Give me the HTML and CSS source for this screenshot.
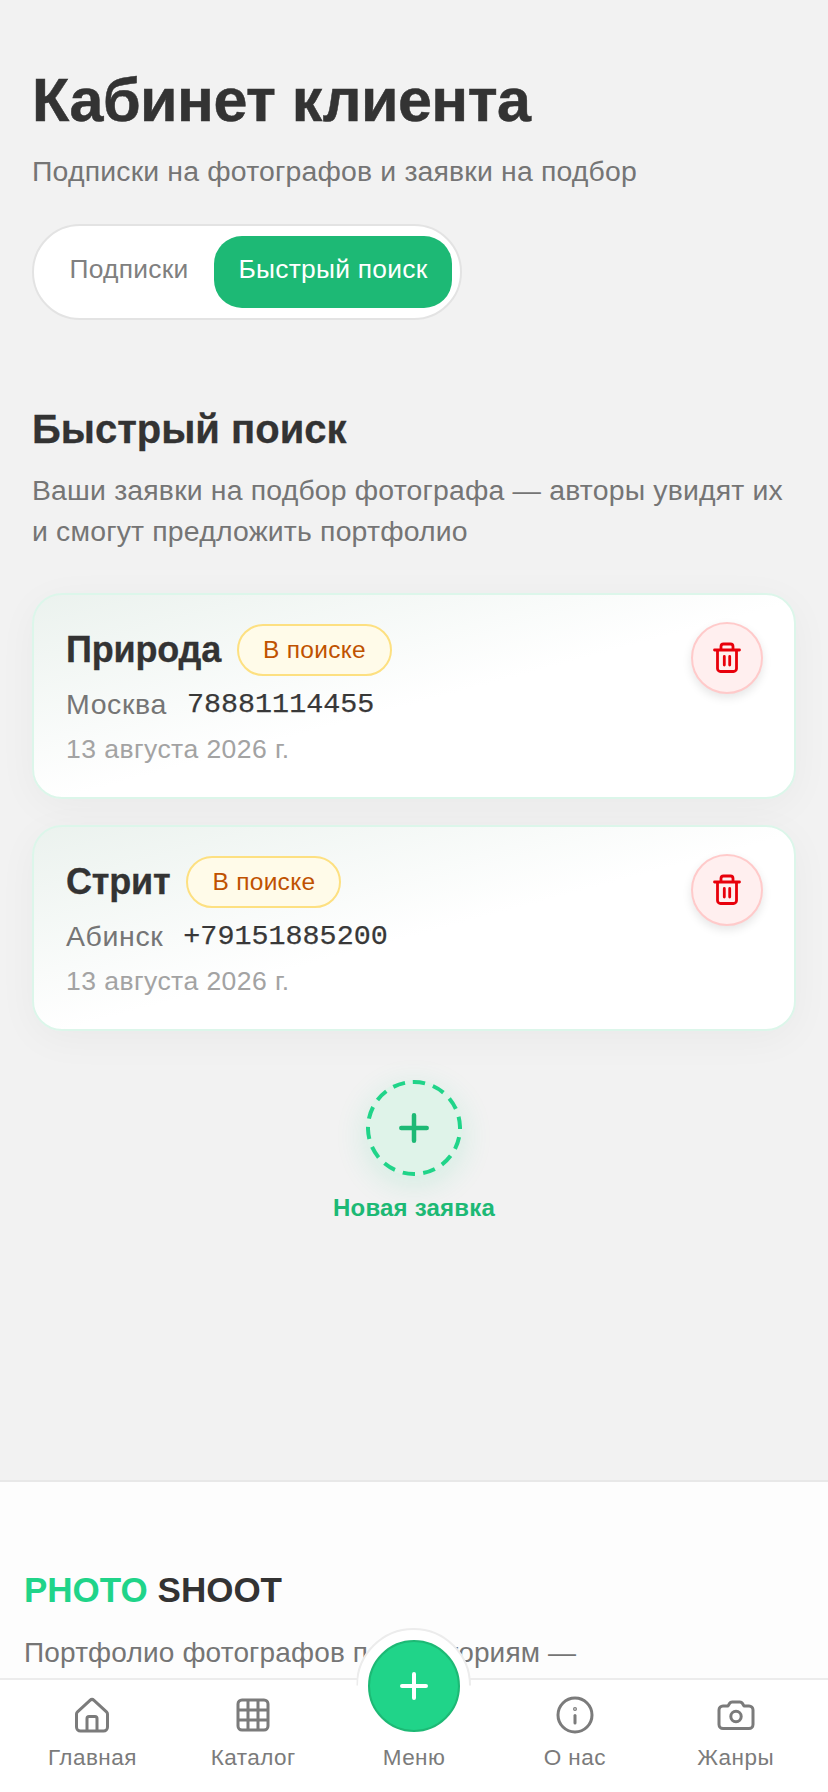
FILE: index.html
```html
<!DOCTYPE html>
<html lang="ru">
<head>
<meta charset="utf-8">
<title>Кабинет клиента</title>
<link rel="stylesheet" href="styles.css">
</head>
<body>
<main class="content">
  <h1 class="title">Кабинет клиента</h1>
  <p class="subtitle">Подписки на фотографов и заявки на подбор</p>
  <div class="tabs">
    <button class="tab">Подписки</button>
    <button class="tab tab-active">Быстрый поиск</button>
  </div>
  <h2 class="section-title">Быстрый поиск</h2>
  <p class="section-desc">Ваши заявки на подбор фотографа — авторы увидят их и смогут предложить портфолио</p>
  <div class="cards">
    <article class="card">
      <div class="card-body">
        <div class="card-head"><h3 class="card-title">Природа</h3><span class="badge">В поиске</span></div>
        <div class="card-meta"><span class="city">Москва</span><span class="phone">78881114455</span></div>
        <div class="date">13 августа 2026 г.</div>
      </div>
      <button class="delete" aria-label="Удалить">
        <svg width="28" height="32" viewBox="0 0 28 32" fill="none" stroke="currentColor" stroke-width="2.800" stroke-linecap="round" stroke-linejoin="round"><path d="M1.500 8h25M8 8V4.500A2.500 2.500 0 0 1 10.500 2h7A2.500 2.500 0 0 1 20 4.500V8M4.500 8v18.500a3 3 0 0 0 3 3h13a3 3 0 0 0 3-3V8M11.300 14.500v8.500M16.700 14.500v8.500"/></svg>
      </button>
    </article>
    <article class="card">
      <div class="card-body">
        <div class="card-head"><h3 class="card-title">Стрит</h3><span class="badge">В поиске</span></div>
        <div class="card-meta"><span class="city">Абинск</span><span class="phone">+79151885200</span></div>
        <div class="date">13 августа 2026 г.</div>
      </div>
      <button class="delete" aria-label="Удалить">
        <svg width="28" height="32" viewBox="0 0 28 32" fill="none" stroke="currentColor" stroke-width="2.800" stroke-linecap="round" stroke-linejoin="round"><path d="M1.500 8h25M8 8V4.500A2.500 2.500 0 0 1 10.500 2h7A2.500 2.500 0 0 1 20 4.500V8M4.500 8v18.500a3 3 0 0 0 3 3h13a3 3 0 0 0 3-3V8M11.300 14.500v8.500M16.700 14.500v8.500"/></svg>
      </button>
    </article>
  </div>
  <div class="new-request">
    <div class="new-circle">
      <svg class="new-dash" width="96" height="96" viewBox="0 0 96 96" fill="none"><circle cx="48" cy="48" r="46" stroke="#20d489" stroke-width="4" stroke-dasharray="12.400 8.240" transform="rotate(-91.500 48 48)"/></svg>
      <svg width="32" height="32" viewBox="0 0 32 32" fill="none" stroke="currentColor" stroke-width="4.500" stroke-linecap="round"><path d="M16 3.300v25.400M3.300 16h25.400"/></svg>
    </div>
    <span class="new-label">Новая заявка</span>
  </div>
</main>
<footer class="site-footer">
  <div class="brand"><span class="brand-accent">PHOTO</span> SHOOT</div>
  <p class="footer-text">Портфолио фотографов по категориям —</p>
</footer>
<nav class="tabbar">
  <a class="nav-item">
    <span class="nav-slot"><svg width="36" height="36" viewBox="0 0 36 36" fill="none" stroke="currentColor" stroke-width="3" stroke-linejoin="round"><path d="M2.500 17a3 3 0 0 1 1-2.200L16 3.300a3 3 0 0 1 4 0l12.500 11.500a3 3 0 0 1 1 2.200v13a4 4 0 0 1-4 4h-23a4 4 0 0 1-4-4z"/><path d="M13 34V21.500a2 2 0 0 1 2-2h6a2 2 0 0 1 2 2V34"/></svg></span>
    <span>Главная</span>
  </a>
  <a class="nav-item">
    <span class="nav-slot"><svg width="36" height="36" viewBox="0 0 36 36" fill="none" stroke="currentColor" stroke-width="3" stroke-linejoin="round"><rect x="3" y="3" width="30" height="30" rx="4"/><path d="M13 3v30M23 3v30M3 13h30M3 23h30"/></svg></span>
    <span>Каталог</span>
  </a>
  <a class="nav-item">
    <span class="fab-ring"></span>
    <span class="fab"><svg width="28" height="28" viewBox="0 0 28 28" fill="none" stroke="currentColor" stroke-width="4" stroke-linecap="round"><path d="M14 2v24M2 14h24"/></svg></span>
    <span class="nav-slot"></span>
    <span>Меню</span>
  </a>
  <a class="nav-item">
    <span class="nav-slot"><svg width="38" height="38" viewBox="0 0 38 38" fill="none" stroke="currentColor" stroke-width="3" stroke-linecap="round"><circle cx="19" cy="19" r="17"/><path d="M19 19.500V27"/><circle cx="19" cy="13" r=".6" stroke-width="2.800"/></svg></span>
    <span>О нас</span>
  </a>
  <a class="nav-item">
    <span class="nav-slot"><svg width="38" height="32" viewBox="0 0 38 32" fill="none" stroke="currentColor" stroke-width="3" stroke-linejoin="round"><path d="M2 11a4 4 0 0 1 4-4h5l1.600-2.600A3 3 0 0 1 15.200 3h7.600a3 3 0 0 1 2.600 1.400L27 7h5a4 4 0 0 1 4 4v14.500a4 4 0 0 1-4 4H6a4 4 0 0 1-4-4z"/><circle cx="19" cy="17.500" r="5.200"/></svg></span>
    <span>Жанры</span>
  </a>
</nav>
</body>
</html>
```
FILE: styles.css
```css
* { box-sizing: border-box; }
html, body { margin: 0; padding: 0; }
body {
  width: 828px;
  height: 1792px;
  overflow: hidden;
  position: relative;
  background: #f2f2f2;
  color: #333;
  font-family: "Liberation Sans", Arial, sans-serif;
}
.content { height: 1480px; padding: 64px 32px 0; }
.title { margin: 0; font-size: 61px; line-height: 72px; font-weight: 700; letter-spacing: -0.5px; -webkit-text-stroke: 0.5px #333; color: #333; }
.subtitle { margin: 15px 0 0; font-size: 28.400px; line-height: 40px; letter-spacing: 0.18px; color: #757575; }
.tabs {
  margin-top: 33px;
  width: 430px;
  height: 96px;
  display: flex;
  align-items: center;
  justify-content: space-between;
  padding: 0 8px 0 10px;
  background: #fff;
  border: 2px solid #e3e3e3;
  border-radius: 48px;
}
.tab {
  border: 0;
  background: none;
  font: inherit;
  font-size: 26.400px;
  letter-spacing: 0.25px;
  color: #808080;
  padding: 0 0 5px;
  height: 72px;
  width: 170px;
}
.tab-active { width: 238px; background: #1db975; color: #fff; border-radius: 28px; }
.section-title { margin: 84px 0 0; font-size: 40px; line-height: 50px; font-weight: 700; -webkit-text-stroke: 0.3px #333; }
.section-desc { margin: 16px 0 0; font-size: 28.400px; line-height: 41px; letter-spacing: 0.18px; color: #757575; }
.cards { margin-top: 41px; display: flex; flex-direction: column; gap: 26px; }
.card {
  height: 206px;
  display: flex;
  justify-content: space-between;
  align-items: flex-start;
  padding: 29px 31px 0 32px;
  border: 2px solid #dcf6ea;
  border-radius: 30px;
  background: linear-gradient(165deg, #ebf2ee 0%, #ffffff 52%);
  box-shadow: 0 8px 40px rgba(0, 0, 0, 0.04);
}
.card-head { display: flex; align-items: center; gap: 16px; }
.card-title { margin: 0; font-size: 36px; line-height: 52px; font-weight: 700; letter-spacing: -0.2px; -webkit-text-stroke: 0.3px #333; }
.badge {
  height: 52px;
  padding: 0 24px;
  display: flex;
  align-items: center;
  font-size: 24.500px;
  letter-spacing: 0.3px;
  color: #bf5200;
  background: #fffbe9;
  border: 2px solid #fde081;
  border-radius: 26px;
}
.card-meta { margin-top: 10px; display: flex; align-items: center; gap: 20px; height: 36px; }
.city { font-size: 28.500px; letter-spacing: 0.6px; color: #757575; }
.phone { font-family: "Liberation Mono", monospace; font-size: 28.400px; color: #383838; -webkit-text-stroke: 0.25px #383838; }
.date { margin-top: 9px; font-size: 26.500px; line-height: 36px; letter-spacing: 0.45px; color: #a3a3a3; }
.delete {
  width: 72px;
  height: 72px;
  margin-top: -2px;
  padding: 0;
  display: flex;
  align-items: center;
  justify-content: center;
  color: #e8000b;
  background: #ffefef;
  border: 2px solid #ffcaca;
  border-radius: 50%;
  box-shadow: 0 4px 10px rgba(0, 0, 0, 0.1);
}
.new-request { margin-top: 49px; display: flex; flex-direction: column; align-items: center; gap: 16px; }
.new-circle {
  position: relative;
  width: 96px;
  height: 96px;
  display: flex;
  align-items: center;
  justify-content: center;
  color: #1db975;
  background: #dff3e9;
  border-radius: 50%;
  box-shadow: 0 8px 32px rgba(32, 212, 137, 0.16);
}
.new-dash { position: absolute; top: 0; left: 0; }
.new-label { font-size: 24px; line-height: 32px; font-weight: 700; letter-spacing: 0.2px; color: #1db975; }
.site-footer {
  height: 312px;
  padding: 84px 24px 0;
  background: #fdfdfd;
  border-top: 2px solid #e8e8e8;
}
.brand { font-size: 35px; line-height: 48px; font-weight: 700; color: #333; }
.brand-accent { color: #20d489; }
.footer-text { margin: 19px 0 0; font-size: 28px; line-height: 40px; letter-spacing: 0.16px; color: #757575; }
.tabbar {
  position: absolute;
  left: 0;
  right: 0;
  bottom: 0;
  height: 114px;
  display: grid;
  grid-template-columns: repeat(5, 1fr);
  padding: 0 12px;
  background: #fff;
  border-top: 2px solid #ececec;
}
.nav-item {
  position: relative;
  display: flex;
  flex-direction: column;
  align-items: center;
  padding-top: 15px;
  font-size: 22.500px;
  line-height: 28px;
  letter-spacing: 0.45px;
  color: #7b7b7b;
}
.nav-slot { height: 40px; margin-bottom: 9px; display: flex; align-items: center; }
.fab-ring {
  position: absolute;
  top: -52px;
  left: 50%;
  width: 115px;
  height: 115px;
  margin-left: -57.500px;
  background: #fff;
  border-radius: 50%;
  border: 2px solid #ececec;
  clip-path: inset(0 0 50% 0);
}
.fab {
  position: absolute;
  top: -40px;
  left: 50%;
  width: 92px;
  height: 92px;
  margin-left: -46px;
  display: flex;
  align-items: center;
  justify-content: center;
  color: #fff;
  background: #20d489;
  border: 2px solid #1db975;
  border-radius: 50%;
}
```
